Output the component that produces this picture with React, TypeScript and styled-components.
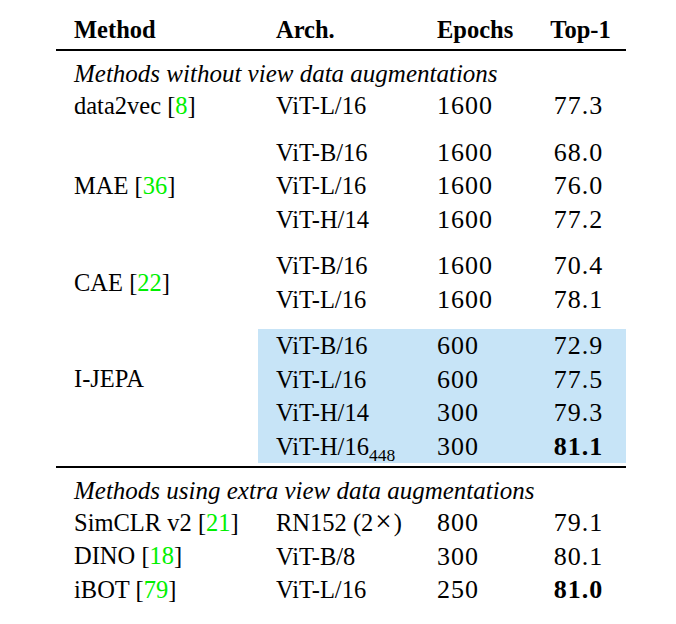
import React from 'react';
import styled, { createGlobalStyle } from 'styled-components';

const ROW = 33.5;

const GlobalStyle = createGlobalStyle`
  html, body {
    margin: 0;
    padding: 0;
    background: #ffffff;
  }
  body {
    font-family: "Liberation Serif", "Times New Roman", serif;
    color: #000000;
  }
`;

const Table = styled.div`
  width: 570px;
  margin-left: 56px;
  padding-top: 13px;
  font-size: 24.5px;
`;

const Group = styled.div<{ $gap?: boolean }>`
  display: flex;
  margin-top: ${(p) => (p.$gap ? 13 : 0)}px;
`;

const MethodCol = styled.div<{ $span?: number; $bold?: boolean }>`
  box-sizing: border-box;
  width: 202px;
  padding-left: 18px;
  height: ${(p) => (p.$span ?? 1) * ROW}px;
  display: flex;
  align-items: center;
  white-space: nowrap;
  font-weight: ${(p) => (p.$bold ? 700 : 400)};
`;

const Rows = styled.div<{ $highlight?: boolean }>`
  flex: 1;
  background: ${(p) => (p.$highlight ? '#c7e4f7' : 'transparent')};
`;

const DataRow = styled.div<{ $bold?: boolean }>`
  display: grid;
  grid-template-columns: 161px 106px 75px;
  padding-left: 18px;
  height: ${ROW}px;
  line-height: ${ROW}px;
  align-items: center;
  white-space: nowrap;
  font-weight: ${(p) => (p.$bold ? 700 : 400)};
`;

const Num = styled.span`
  font-size: 26px;
  letter-spacing: 1px;
`;

const Score = styled.span<{ $bold?: boolean; $num?: boolean }>`
  text-align: center;
  font-weight: ${(p) => (p.$bold ? 700 : 'inherit')};
  font-size: ${(p) => (p.$num ? '26px' : 'inherit')};
  letter-spacing: ${(p) => (p.$num ? '1px' : 'normal')};
  padding-right: ${(p) => (p.$num ? 4 : 0)}px;
`;

const Rule = styled.div<{ $top: number }>`
  height: 2.5px;
  margin-top: ${(p) => p.$top}px;
  background: #000000;
`;

const SectionLabel = styled.div`
  padding-left: 18px;
  margin-top: 8px;
  height: 30px;
  line-height: 30px;
  font-size: 25px;
  font-style: italic;
  white-space: nowrap;
`;

const Cite = styled.span`
  color: #00f000;
`;

const Sub = styled.sub`
  font-size: 17.5px;
  line-height: 0;
  vertical-align: -6px;
`;

const Times = styled.span`
  margin: 0 2px;
  font-size: 29px;
  line-height: 0;
`;

type Entry = {
  arch: React.ReactNode;
  epochs: string;
  top1: string;
  best?: boolean;
};

type MethodGroup = {
  name: string;
  cite?: string;
  span?: number;
  highlight?: boolean;
  rows: Entry[];
};

type AugEntry = Entry & { name: string; cite: string };

const withoutAug: MethodGroup[] = [
  {
    name: 'data2vec',
    cite: '8',
    rows: [{ arch: 'ViT-L/16', epochs: '1600', top1: '77.3' }],
  },
  {
    name: 'MAE',
    cite: '36',
    rows: [
      { arch: 'ViT-B/16', epochs: '1600', top1: '68.0' },
      { arch: 'ViT-L/16', epochs: '1600', top1: '76.0' },
      { arch: 'ViT-H/14', epochs: '1600', top1: '77.2' },
    ],
  },
  {
    name: 'CAE',
    cite: '22',
    rows: [
      { arch: 'ViT-B/16', epochs: '1600', top1: '70.4' },
      { arch: 'ViT-L/16', epochs: '1600', top1: '78.1' },
    ],
  },
  {
    name: 'I-JEPA',
    span: 3,
    highlight: true,
    rows: [
      { arch: 'ViT-B/16', epochs: '600', top1: '72.9' },
      { arch: 'ViT-L/16', epochs: '600', top1: '77.5' },
      { arch: 'ViT-H/14', epochs: '300', top1: '79.3' },
      {
        arch: (
          <span>
            ViT-H/16<Sub>448</Sub>
          </span>
        ),
        epochs: '300',
        top1: '81.1',
        best: true,
      },
    ],
  },
];

const withAug: AugEntry[] = [
  {
    name: 'SimCLR v2',
    cite: '21',
    arch: (
      <span>
        RN152 (2<Times>×</Times>)
      </span>
    ),
    epochs: '800',
    top1: '79.1',
  },
  { name: 'DINO', cite: '18', arch: 'ViT-B/8', epochs: '300', top1: '80.1' },
  { name: 'iBOT', cite: '79', arch: 'ViT-L/16', epochs: '250', top1: '81.0', best: true },
];

const MethodName = ({ name, cite }: { name: string; cite?: string }) => (
  <span>
    {name}
    {cite && (
      <>
        {' '}[<Cite>{cite}</Cite>]
      </>
    )}
  </span>
);

const EntryRow = ({ entry }: { entry: Entry }) => (
  <DataRow>
    <span>{entry.arch}</span>
    <Num>{entry.epochs}</Num>
    <Score $num $bold={entry.best}>
      {entry.top1}
    </Score>
  </DataRow>
);

const App = () => {
  return (
    <>
      <GlobalStyle />
      <Table>
        <Group>
          <MethodCol $bold>Method</MethodCol>
          <Rows>
            <DataRow $bold>
              <span>Arch.</span>
              <span>Epochs</span>
              <Score>Top-1</Score>
            </DataRow>
          </Rows>
        </Group>
        <Rule $top={2} />

        <SectionLabel>Methods without view data augmentations</SectionLabel>
        {withoutAug.map((g, i) => (
          <Group key={g.name} $gap={i > 0}>
            <MethodCol $span={g.span ?? g.rows.length}>
              <MethodName name={g.name} cite={g.cite} />
            </MethodCol>
            <Rows $highlight={g.highlight}>
              {g.rows.map((r, j) => (
                <EntryRow key={j} entry={r} />
              ))}
            </Rows>
          </Group>
        ))}
        <Rule $top={2.5} />

        <SectionLabel>Methods using extra view data augmentations</SectionLabel>
        {withAug.map((r) => (
          <Group key={r.name}>
            <MethodCol>
              <MethodName name={r.name} cite={r.cite} />
            </MethodCol>
            <Rows>
              <EntryRow entry={r} />
            </Rows>
          </Group>
        ))}
      </Table>
    </>
  );
};

export default App;
